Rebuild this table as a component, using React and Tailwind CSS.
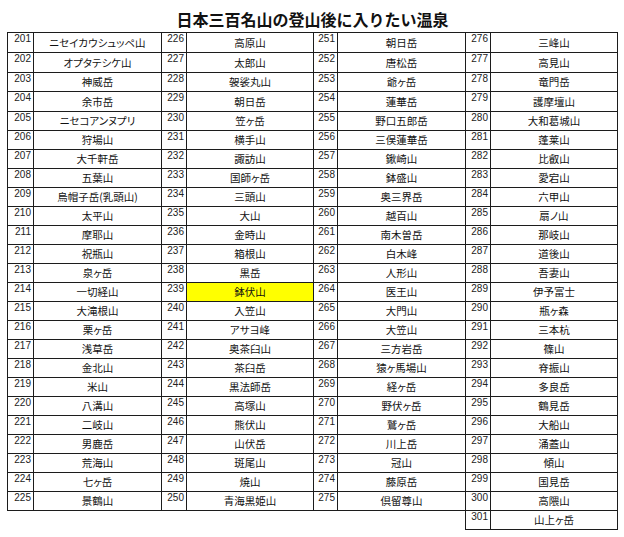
import React from "react";

const groups = [
  {
    start: 201,
    numW: "w-[26px]",
    nameW: "w-[128px]",
    names: [
      "ニセイカウシュッペ山", "オプタテシケ山", "神威岳", "余市岳", "ニセコアンヌプリ",
      "狩場山", "大千軒岳", "五葉山", "烏帽子岳(乳頭山)", "太平山",
      "摩耶山", "祝瓶山", "泉ヶ岳", "一切経山", "大滝根山",
      "栗ヶ岳", "浅草岳", "金北山", "米山", "八溝山",
      "二岐山", "男鹿岳", "荒海山", "七ヶ岳", "景鶴山",
    ],
  },
  {
    start: 226,
    numW: "w-[25px]",
    nameW: "w-[127px]",
    names: [
      "高原山", "太郎山", "袈裟丸山", "朝日岳", "笠ヶ岳",
      "横手山", "諏訪山", "国師ヶ岳", "三頭山", "大山",
      "金時山", "箱根山", "黒岳", "鉢伏山", "入笠山",
      "アサヨ峰", "奥茶臼山", "茶臼岳", "黒法師岳", "高塚山",
      "熊伏山", "山伏岳", "斑尾山", "焼山", "青海黒姫山",
    ],
  },
  {
    start: 251,
    numW: "w-[24px]",
    nameW: "w-[128px]",
    names: [
      "朝日岳", "唐松岳", "爺ヶ岳", "蓮華岳", "野口五郎岳",
      "三俣蓮華岳", "鍬崎山", "鉢盛山", "奥三界岳", "越百山",
      "南木曽岳", "白木峰", "人形山", "医王山", "大門山",
      "大笠山", "三方岩岳", "猿ヶ馬場山", "経ヶ岳", "野伏ヶ岳",
      "鷲ヶ岳", "川上岳", "冠山", "藤原岳", "倶留尊山",
    ],
  },
  {
    start: 276,
    numW: "w-[25px]",
    nameW: "w-[127px]",
    names: [
      "三峰山", "高見山", "竜門岳", "護摩壇山", "大和葛城山",
      "蓬莱山", "比叡山", "愛宕山", "六甲山", "扇ノ山",
      "那岐山", "道後山", "吾妻山", "伊予富士", "瓶ヶ森",
      "三本杭", "篠山", "脊振山", "多良岳", "鶴見岳",
      "大船山", "涌蓋山", "傾山", "国見岳", "高隈山",
      "山上ヶ岳",
    ],
  },
];

const tall = (i) => i === 0 || i === 1 || i === 3;

export default function App() {
  return (
    <div className="w-[624px] h-[537px] bg-white text-black overflow-hidden">
      <div className="pt-[9px] w-[624px] flex">
        <h1
          className="w-[611px] ml-[7px] text-center text-[16px] leading-[20px] font-bold text-[#111]"
          style={{ fontFamily: '"Noto Sans CJK JP", sans-serif' }}
        >
          日本三百名山の登山後に入りたい温泉
        </h1>
      </div>
      <div className="mt-[3px] ml-[7px] flex items-start">
        {groups.map((g, gi) => (
          <div
            key={g.start}
            className={
              gi === 0
                ? "flex flex-col border-l border-t border-[#1c1c1c]"
                : "flex flex-col border-t border-[#1c1c1c]"
            }
          >
            {g.names.map((name, i) => {
              const num = g.start + i;
              const isLastExtra = i === 25;
              const highlight = num === 239;
              return (
                <div
                  key={num}
                  className={
                    (isLastExtra ? "-ml-px border-l border-[#1c1c1c] " : "") +
                    "flex " +
                    (tall(i) ? "h-[20px]" : "h-[19px]")
                  }
                >
                  <div
                    className={
                      g.numW +
                      " shrink-0 border-r border-b border-[#1c1c1c] text-right pr-[2px] pt-[1px] text-[10px] leading-[10px] text-[#222]"
                    }
                    style={{ fontFamily: '"Liberation Sans", Arial, sans-serif' }}
                  >
                    {num}
                  </div>
                  <div
                    className={
                      g.nameW +
                      " shrink-0 border-r border-b border-[#1c1c1c] flex items-center justify-center text-[10.5px] leading-[18px] text-[#111] whitespace-nowrap [font-feature-settings:'palt'] " +
                      (highlight ? "bg-[#ffff00]" : "bg-white")
                    }
                    style={{ fontFamily: '"Noto Sans CJK JP", sans-serif' }}
                  >
                    {name}
                  </div>
                </div>
              );
            })}
          </div>
        ))}
      </div>
    </div>
  );
}
